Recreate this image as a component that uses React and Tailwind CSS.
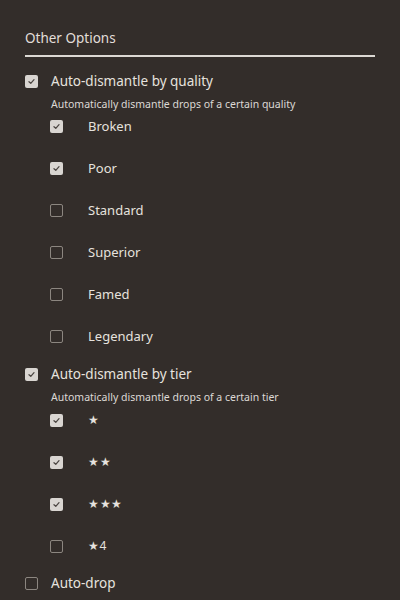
const QUALITIES = [
  { label: 'Broken', checked: true },
  { label: 'Poor', checked: true },
  { label: 'Standard', checked: false },
  { label: 'Superior', checked: false },
  { label: 'Famed', checked: false },
  { label: 'Legendary', checked: false },
];

const TIERS = [
  { label: '★', checked: true },
  { label: '★★', checked: true },
  { label: '★★★', checked: true },
  { label: '★4', checked: false },
];

function Box({ checked }) {
  if (checked) {
    return (
      <span className="flex h-[13px] w-[13px] shrink-0 items-center justify-center rounded-[2px] bg-[#d9d5d1]">
        <svg width="9" height="9" viewBox="0 0 10 10" fill="none">
          <path d="M2.2 5.2 L4.2 7 L7.8 3" stroke="#4a4440" strokeWidth="1.4" strokeLinecap="round" strokeLinejoin="round" />
        </svg>
      </span>
    );
  }
  return <span className="h-[13px] w-[13px] shrink-0 rounded-[2px] border border-[#8c8680]" />;
}

function SubRow({ label, checked, small }) {
  return (
    <div className="flex h-[42px] items-center pl-[50px]">
      <Box checked={checked} />
      <span className={`ml-[25px] text-[#e6e2de] ${small ? 'text-[12px] tracking-[0.5px]' : 'text-[13px]'}`}>{label}</span>
    </div>
  );
}

function Main({ label, checked, description }) {
  return (
    <div>
      <div className="flex items-center gap-[13px] pl-[25px]">
        <Box checked={checked} />
        <span className="text-[13.5px] text-[#e6e2de]">{label}</span>
      </div>
      {description ? (
        <p className="mt-[5px] pl-[51px] text-[10.5px] text-[#ddd9d5]">{description}</p>
      ) : null}
    </div>
  );
}

export default function App() {
  return (
    <div
      className="h-[600px] w-[400px] overflow-hidden bg-[#332d2a]"
      style={{ fontFamily: '"Noto Sans", "Open Sans", sans-serif' }}
    >
      <div className="px-[25px] pt-[28px]">
        <h2 className="text-[13.5px] text-[#e2ded9]">Other Options</h2>
        <div className="mt-[7px] h-[2px] bg-[#dcd8d3]" />
      </div>

      <div className="mt-[14px]">
        <Main
          label="Auto-dismantle by quality"
          checked
          description="Automatically dismantle drops of a certain quality"
        />
        <div className="mt-[-7px]">
          {QUALITIES.map((q) => (
            <SubRow key={q.label} {...q} />
          ))}
        </div>
      </div>

      <div className="mt-[7px]">
        <Main
          label="Auto-dismantle by tier"
          checked
          description="Automatically dismantle drops of a certain tier"
        />
        <div className="mt-[-6px]">
          {TIERS.map((t) => (
            <SubRow key={t.label} {...t} small />
          ))}
        </div>
      </div>

      <div className="mt-[6px]">
        <Main label="Auto-drop" checked={false} />
      </div>
    </div>
  );
}
